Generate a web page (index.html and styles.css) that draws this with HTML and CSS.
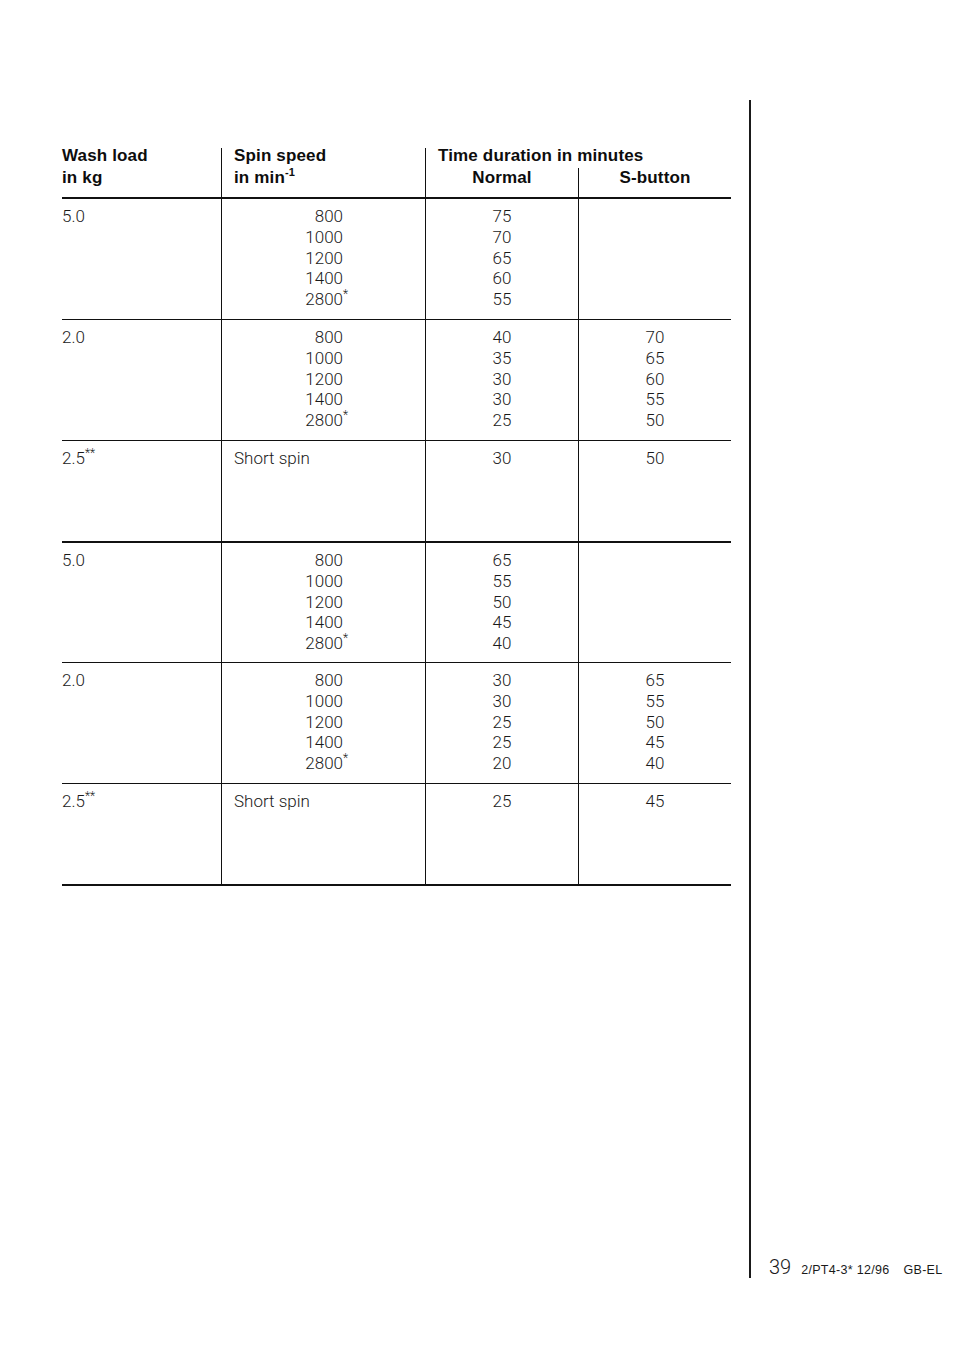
FILE: index.html
```html
<!DOCTYPE html>
<html lang="en">
<head>
<meta charset="utf-8">
<title>Wash load table</title>
<link rel="stylesheet" href="styles.css">
</head>
<body>
<div class="page">
  <div class="main">
    <div class="table">
      <div class="thead">
        <div class="h h-load">Wash load<br>in kg</div>
        <div class="h h-spin"><span class="h-lines">Spin speed<br>in min<sup class="exp">-1</sup></span></div>
        <div class="h h-time">Time duration in minutes</div>
        <div class="h h-normal">Normal</div>
        <div class="h h-sbtn">S-button</div>
      </div>

      <div class="row">
        <div class="c c-load">5.0</div>
        <div class="c c-spin">800<br>1000<br>1200<br>1400<br>2800<sup class="fn">*</sup></div>
        <div class="c c-num">75<br>70<br>65<br>60<br>55</div>
        <div class="c c-num"></div>
      </div>

      <div class="row">
        <div class="c c-load">2.0</div>
        <div class="c c-spin">800<br>1000<br>1200<br>1400<br>2800<sup class="fn">*</sup></div>
        <div class="c c-num">40<br>35<br>30<br>30<br>25</div>
        <div class="c c-num">70<br>65<br>60<br>55<br>50</div>
      </div>

      <div class="row row-short row-sep">
        <div class="c c-load">2.5<sup class="fn2">**</sup></div>
        <div class="c c-text">Short spin</div>
        <div class="c c-num">30</div>
        <div class="c c-num">50</div>
      </div>

      <div class="row row-after">
        <div class="c c-load">5.0</div>
        <div class="c c-spin">800<br>1000<br>1200<br>1400<br>2800<sup class="fn">*</sup></div>
        <div class="c c-num">65<br>55<br>50<br>45<br>40</div>
        <div class="c c-num"></div>
      </div>

      <div class="row">
        <div class="c c-load">2.0</div>
        <div class="c c-spin">800<br>1000<br>1200<br>1400<br>2800<sup class="fn">*</sup></div>
        <div class="c c-num">30<br>30<br>25<br>25<br>20</div>
        <div class="c c-num">65<br>55<br>50<br>45<br>40</div>
      </div>

      <div class="row row-short row-last">
        <div class="c c-load">2.5<sup class="fn2">**</sup></div>
        <div class="c c-text">Short spin</div>
        <div class="c c-num">25</div>
        <div class="c c-num">45</div>
      </div>
    </div>
  </div>
  <div class="side">
    <div class="footer"><span class="pno">39</span><span class="code">2/PT4-3* 12/96</span><span class="code lang">GB-EL</span></div>
  </div>
</div>
</body>
</html>
```

FILE: styles.css
```css
html, body {
  margin: 0;
  padding: 0;
  background: #ffffff;
}
body {
  width: 954px;
  height: 1352px;
  overflow: hidden;
  color: #1a1a1a;
  font-family: "Roboto", "Liberation Sans", Arial, sans-serif;
  font-weight: 300;
}
.page {
  display: flex;
  align-items: flex-start;
}
.main {
  width: 749px;
  box-sizing: border-box;
  padding: 148px 0 0 62px;
}
.table {
  width: 669px;
}
.thead {
  display: grid;
  grid-template-columns: 159px 204px 153px 153px;
  grid-template-rows: 20px 29px;
  border-bottom: 2px solid #111;
  font-family: "Liberation Sans", Arial, sans-serif;
  font-weight: 700;
  font-size: 17px;
  line-height: 22px;
  color: #0d0d0d;
  letter-spacing: 0.15px;
}
.h-load {
  grid-column: 1;
  grid-row: 1 / 3;
  margin-top: -3px;
}
.h-spin {
  grid-column: 2;
  grid-row: 1 / 3;
  border-left: 1px solid #111;
  padding-left: 12px;
}
.h-lines {
  display: block;
  margin-top: -3px;
}
.h-time {
  grid-column: 3 / 5;
  grid-row: 1;
  border-left: 1px solid #111;
  padding-left: 12px;
  line-height: 16px;
}
.h-normal {
  grid-column: 3;
  grid-row: 2;
  border-left: 1px solid #111;
  text-align: center;
  line-height: 18px;
  padding-top: 1px;
}
.h-sbtn {
  grid-column: 4;
  grid-row: 2;
  border-left: 1px solid #111;
  text-align: center;
  line-height: 18px;
  padding-top: 1px;
}
.exp {
  font-size: 11px;
  line-height: 0;
  vertical-align: 7px;
  letter-spacing: 0;
}
.row {
  display: grid;
  grid-template-columns: 159px 204px 153px 153px;
  height: 121px;
  box-sizing: border-box;
  border-bottom: 1px solid #111;
  font-size: 17px;
  line-height: 20.8px;
}
.row-sep {
  height: 102px;
  border-bottom-width: 2px;
}
.row-after {
  height: 120px;
}
.row-last {
  height: 102px;
  border-bottom-width: 2px;
}
.c {
  padding-top: 7px;
}
.c + .c {
  border-left: 1px solid #111;
}
.c-spin {
  text-align: right;
  padding-right: 82px;
}
.c-text {
  padding-left: 12px;
}
.c-num {
  text-align: center;
}
.fn {
  display: inline-block;
  width: 0;
  font-size: 12px;
  line-height: 0;
  vertical-align: 7px;
}
.fn2 {
  font-size: 12px;
  line-height: 0;
  vertical-align: 7px;
}
.side {
  margin-top: 100px;
  height: 1178px;
  border-left: 2px solid #1a1a1a;
  display: flex;
  flex-direction: column;
  justify-content: flex-end;
  padding-left: 18px;
}
.footer {
  display: flex;
  align-items: baseline;
  white-space: nowrap;
  line-height: 15px;
}
.pno {
  font-size: 20px;
  margin-right: 10px;
}
.code {
  font-size: 12.5px;
  font-weight: 400;
  font-family: "Liberation Sans", Arial, sans-serif;
  letter-spacing: 0.3px;
}
.lang {
  margin-left: 14px;
}
```
